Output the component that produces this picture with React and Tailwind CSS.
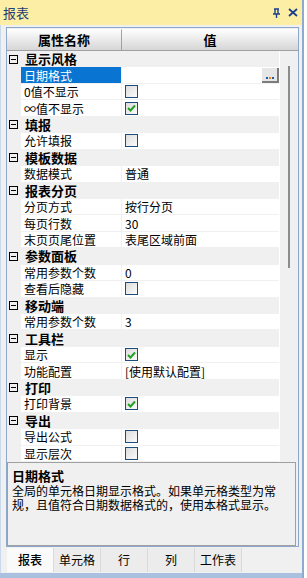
import React from "react";

// Property sections shown in the grid
const sections = [
  {
    title: "显示风格",
    rows: [
      { name: "日期格式", selected: true, button: true },
      { name: "0值不显示", check: false },
      { name: "∞值不显示", check: true },
    ],
  },
  { title: "填报", rows: [{ name: "允许填报", check: false }] },
  { title: "模板数据", rows: [{ name: "数据模式", value: "普通" }] },
  {
    title: "报表分页",
    rows: [
      { name: "分页方式", value: "按行分页" },
      { name: "每页行数", value: "30" },
      { name: "末页页尾位置", value: "表尾区域前面" },
    ],
  },
  {
    title: "参数面板",
    rows: [
      { name: "常用参数个数", value: "0" },
      { name: "查看后隐藏", check: false },
    ],
  },
  { title: "移动端", rows: [{ name: "常用参数个数", value: "3" }] },
  {
    title: "工具栏",
    rows: [
      { name: "显示", check: true },
      { name: "功能配置", value: "[使用默认配置]" },
    ],
  },
  { title: "打印", rows: [{ name: "打印背景", check: true }] },
  {
    title: "导出",
    rows: [
      { name: "导出公式", check: false },
      { name: "显示层次", check: false },
    ],
  },
];

const tabs = ["报表", "单元格", "行", "列", "工作表"];

function CheckBox({ checked }) {
  return (
    <div className="w-[13px] h-[13px] border border-[#1c4c7c] bg-gradient-to-br from-[#dcdcdc] to-[#fbfbfb] flex items-center justify-center">
      {checked && (
        <svg width="9" height="8" viewBox="0 0 9 8">
          <path d="M1 4 L3.5 6.5 L8 1.5" fill="none" stroke="#21a121" strokeWidth="2" />
        </svg>
      )}
    </div>
  );
}

function Category({ title }) {
  return (
    <div className="h-[16.8px] flex items-center bg-[#f0f0f0] pl-[2px]">
      <div className="w-[9px] h-[9px] border border-black flex items-center justify-center">
        <div className="w-[5px] h-px bg-black" />
      </div>
      <span className="pl-[7px] text-[13px] font-bold leading-[14px] text-black">{title}</span>
    </div>
  );
}

function Row({ row }) {
  return (
    <div className="h-[16.8px] flex bg-[#f0f0f0]">
      <div className="w-[14px]" />
      <div
        className={`w-[100px] flex items-center pl-[3px] text-[12px] leading-[13px] border-b border-[#f0f0f0] ${
          row.selected ? "bg-[#0a74d2] text-white" : "bg-white text-black"
        }`}
      >
        {row.name}
      </div>
      <div className="w-px" />
      <div className="flex-1 flex items-center pl-[3px] bg-white border-b border-[#f0f0f0] text-[12px] leading-[13px] text-black">
        {row.check !== undefined && <CheckBox checked={row.check} />}
        {row.value}
        {row.button && (
          <div className="ml-auto h-[15px] w-[17px] bg-[#e6e6e6] border-r-2 border-b-2 border-[#7c7c7c] flex items-end justify-center gap-px pb-[2px]">
            <span className="w-[2px] h-[2px] bg-[#1d5aa8]" />
            <span className="w-[2px] h-[2px] bg-[#e08a1e]" />
            <span className="w-[2px] h-[2px] bg-[#1d5aa8]" />
          </div>
        )}
      </div>
    </div>
  );
}

export default function App() {
  return (
    <div
      className="w-[307px] h-[578px] bg-white flex overflow-hidden"
      style={{ fontFamily: '"Noto Sans CJK SC", "Microsoft YaHei", sans-serif' }}
    >
      <div className="w-[304px] h-full flex flex-col border-r-2 border-[#8eaad0] bg-[#c9d8ea]">
        {/* title bar */}
        <div className="h-[25px] bg-[#fcefa5] flex items-center pl-[3px] pr-[4px]">
          <span className="text-[13px] text-[#1f3d74] leading-none">报表</span>
          <div className="ml-auto flex items-center gap-[7px]">
            <svg width="9" height="10" viewBox="0 0 9 10">
              <path d="M2 1 H7 M3 1 V6 M6 1 V6 M1 6 H8 M4.5 6 V10" fill="none" stroke="#1c3f8a" strokeWidth="1.4" />
            </svg>
            <svg width="10" height="9" viewBox="0 0 10 9">
              <path d="M1 1 L9 8 M9 1 L1 8" fill="none" stroke="#1c3f8a" strokeWidth="1.8" />
            </svg>
          </div>
        </div>

        {/* body */}
        <div className="flex-1 flex flex-col bg-[#f0f0f0] ml-[1px] pl-[5px] pr-[3px] pt-[2px]">
          <div className="h-[520px] flex flex-col border border-[#8ea8cb] pt-[1px]">
            {/* header */}
            <div className="h-[22px] flex text-[13px] font-bold text-black">
              <div className="w-[115px] flex items-center justify-center bg-gradient-to-b from-[#fdfdfd] to-[#d6d6d6] border-r border-b border-[#a0a0a0] border-t border-t-white">
                属性名称
              </div>
              <div className="flex-1 flex items-center justify-center bg-gradient-to-b from-[#fdfdfd] to-[#d6d6d6] border-b border-[#a0a0a0] border-t border-t-white">
                值
              </div>
            </div>

            {/* grid */}
            <div className="h-[411px] overflow-hidden flex bg-[#f0f0f0]">
              <div className="w-[272px] flex flex-col">
                {sections.map((s) => (
                  <React.Fragment key={s.title}>
                    <Category title={s.title} />
                    {s.rows.map((r, i) => (
                      <Row key={i} row={r} />
                    ))}
                  </React.Fragment>
                ))}
              </div>
              <div className="flex-1 flex justify-center pt-[15px] border-l border-white">
                <div className="w-[2px] h-[202px] bg-[#8c8c8c]" />
              </div>
            </div>

            {/* description */}
            <div className="flex-1 mr-[2px] border border-[#a0a0a0] bg-[#f0f0f0] pl-[4px] pt-[6px] text-black">
              <div className="text-[13px] font-bold leading-[14px]">日期格式</div>
              <div className="text-[12px] leading-[14px] mt-[1px]">
                全局的单元格日期显示格式。如果单元格类型为常
                <br />
                规，且值符合日期数据格式的，使用本格式显示。
              </div>
            </div>
          </div>

          {/* tabs */}
          <div className="h-[25px] flex pt-[1px] pl-[1px]">
            {tabs.map((t, i) => (
              <div
                key={t}
                className={`w-[47px] flex items-center justify-center text-[12px] text-black border-r border-[#dadada] ${
                  i === 0 ? "bg-[#fafafa] font-medium" : "bg-[#ececec]"
                }`}
              >
                {t}
              </div>
            ))}
          </div>
        </div>
        <div className="h-[5px] bg-[#a9c1df]" />
      </div>
    </div>
  );
}
